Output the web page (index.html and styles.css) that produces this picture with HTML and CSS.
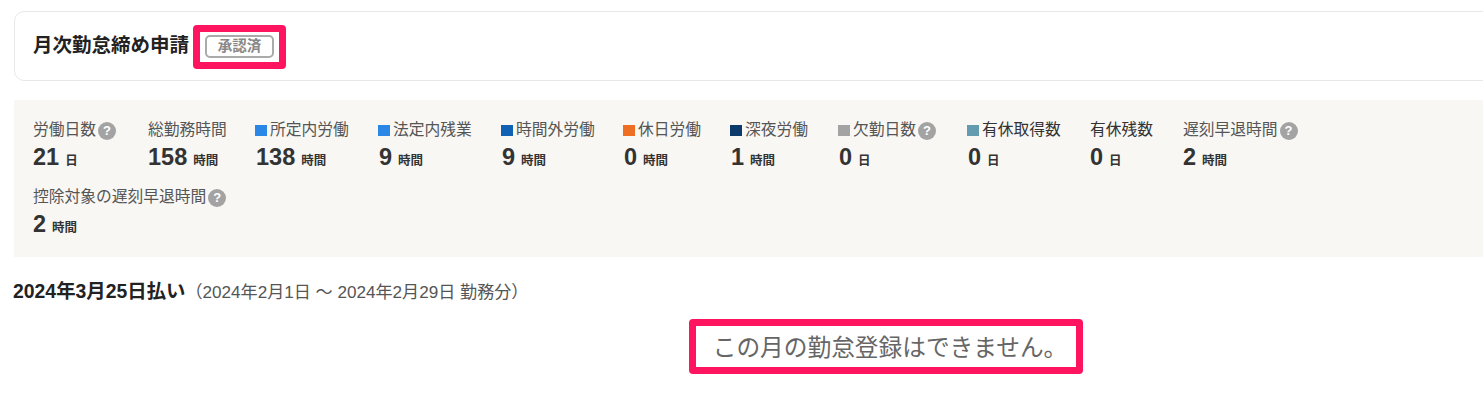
FILE: index.html
```html
<!DOCTYPE html>
<html lang="ja">
<head>
    <meta charset="UTF-8">
    <title>月次勤怠締め申請</title>
    <link rel="stylesheet" href="styles.css">
</head>
<body>
    <div class="head-card">
        <h1 class="head-title">月次勤怠締め申請</h1>
        <div class="mark mark-badge">
            <span class="badge">承認済</span>
        </div>
    </div>

    <div class="summary">
        <div class="item item-first">
            <div class="label">労働日数<i class="help">?</i></div>
            <div class="value">21<small>日</small></div>
        </div>
        <div class="item item-total">
            <div class="label">総勤務時間</div>
            <div class="value">158<small>時間</small></div>
        </div>
        <div class="item item-inner">
            <div class="label"><b class="sq sq-blue"></b>所定内労働</div>
            <div class="value">138<small>時間</small></div>
        </div>
        <div class="item item-legal">
            <div class="label"><b class="sq sq-blue"></b>法定内残業</div>
            <div class="value">9<small>時間</small></div>
        </div>
        <div class="item item-over">
            <div class="label"><b class="sq sq-navy"></b>時間外労働</div>
            <div class="value">9<small>時間</small></div>
        </div>
        <div class="item item-holiday">
            <div class="label"><b class="sq sq-orange"></b>休日労働</div>
            <div class="value">0<small>時間</small></div>
        </div>
        <div class="item item-night">
            <div class="label"><b class="sq sq-dark"></b>深夜労働</div>
            <div class="value">1<small>時間</small></div>
        </div>
        <div class="item item-absent">
            <div class="label"><b class="sq sq-gray"></b>欠勤日数<i class="help">?</i></div>
            <div class="value">0<small>日</small></div>
        </div>
        <div class="item item-paid">
            <div class="label label-dark"><b class="sq sq-teal"></b>有休取得数</div>
            <div class="value">0<small>日</small></div>
        </div>
        <div class="item item-rest">
            <div class="label label-dark">有休残数</div>
            <div class="value">0<small>日</small></div>
        </div>
        <div class="item">
            <div class="label">遅刻早退時間<i class="help">?</i></div>
            <div class="value">2<small>時間</small></div>
        </div>
        <div class="item item-wide">
            <div class="label">控除対象の遅刻早退時間<i class="help">?</i></div>
            <div class="value">2<small>時間</small></div>
        </div>
    </div>

    <p class="period"><strong>2024年3月25日払い</strong><span class="period-sub">（2024年2月1日 ～ 2024年2月29日 勤務分）</span></p>

    <div class="notice-wrap">
        <div class="mark mark-notice">この月の勤怠登録はできません。</div>
    </div>
</body>
</html>
```

FILE: styles.css
```css
* {
    margin: 0;
    padding: 0;
    box-sizing: border-box;
}
body {
    overflow: hidden;
    background: #fff;
    color: #333;
    font-family: "Liberation Sans", "Noto Sans CJK JP", sans-serif;
    padding: 11px 0 0 14px;
    width: 1520px;
}

.head-card {
    height: 70px;
    border: 1px solid #e8e8e8;
    border-radius: 10px;
    padding-left: 18px;
    display: flex;
    align-items: center;
    gap: 4px;
}
.head-title {
    font-size: 19.5px;
    font-weight: 700;
    color: #222;
    margin-top: -5px;
}
.mark {
    border: 7px solid #ff1460;
    border-radius: 4px;
    background: #fff;
}
.mark-badge {
    width: 93px;
    height: 44px;
    display: flex;
    align-items: center;
    justify-content: center;
    margin-top: 1px;
}
.badge {
    width: 69px;
    height: 23px;
    border: 2px solid #aaa;
    border-radius: 5px;
    font-size: 14.5px;
    font-weight: 700;
    line-height: 19px;
    text-align: center;
    color: #888;
}

.summary {
    margin-top: 19px;
    height: 157px;
    background: #f8f7f4;
    padding: 20px 0 0 19px;
    display: flex;
    flex-wrap: wrap;
    align-content: flex-start;
    width: 1469px;
    row-gap: 0;
}
.item {
    height: 67px;
    flex: none;
}
.item-first { width: 115px; }
.item-total { width: 108px; }
.item-inner { width: 123px; }
.item-legal { width: 123px; }
.item-over { width: 122px; }
.item-holiday { width: 107px; }
.item-night { width: 108px; }
.item-absent { width: 129px; }
.item-paid { width: 122px; }
.item-rest { width: 93px; }
.item-wide { width: 400px; }

.label {
    font-size: 15.75px;
    line-height: 20px;
    color: #555;
    display: flex;
    align-items: center;
    white-space: nowrap;
}
.label-dark {
    color: #333;
}
.help {
    width: 18px;
    height: 18px;
    margin: 2px 0 0 2px;
    border-radius: 50%;
    background: #a3a3a3;
    color: #fff;
    font-size: 13px;
    font-style: normal;
    font-weight: 700;
    line-height: 18px;
    text-align: center;
}
.sq {
    width: 12px;
    height: 11px;
    margin: 0 3px 0 -1px;
    flex: none;
}
.sq-blue { background: #2a87e6; }
.sq-navy { background: #1060b4; }
.sq-orange { background: #ee6f24; }
.sq-dark { background: #0b3a6b; }
.sq-gray { background: #a3a3a3; }
.sq-teal { background: #659bae; }

.value {
    font-size: 23.5px;
    font-weight: 700;
    line-height: 34px;
    color: #333;
}
.value small {
    font-size: 12.5px;
    margin-left: 6px;
}

.period {
    margin: 24px 0 0 -1px;
    font-size: 19.4px;
    line-height: 20px;
    color: #222;
}
.period-sub {
    font-size: 17.1px;
    color: #555;
}

.notice-wrap {
    margin-top: 16px;
    padding-left: 675px;
}
.mark-notice {
    width: 394px;
    height: 55px;
    padding-left: 8px;
    font-size: 23.7px;
    line-height: 45px;
    color: #666;
    text-align: center;
    white-space: nowrap;
}
```
